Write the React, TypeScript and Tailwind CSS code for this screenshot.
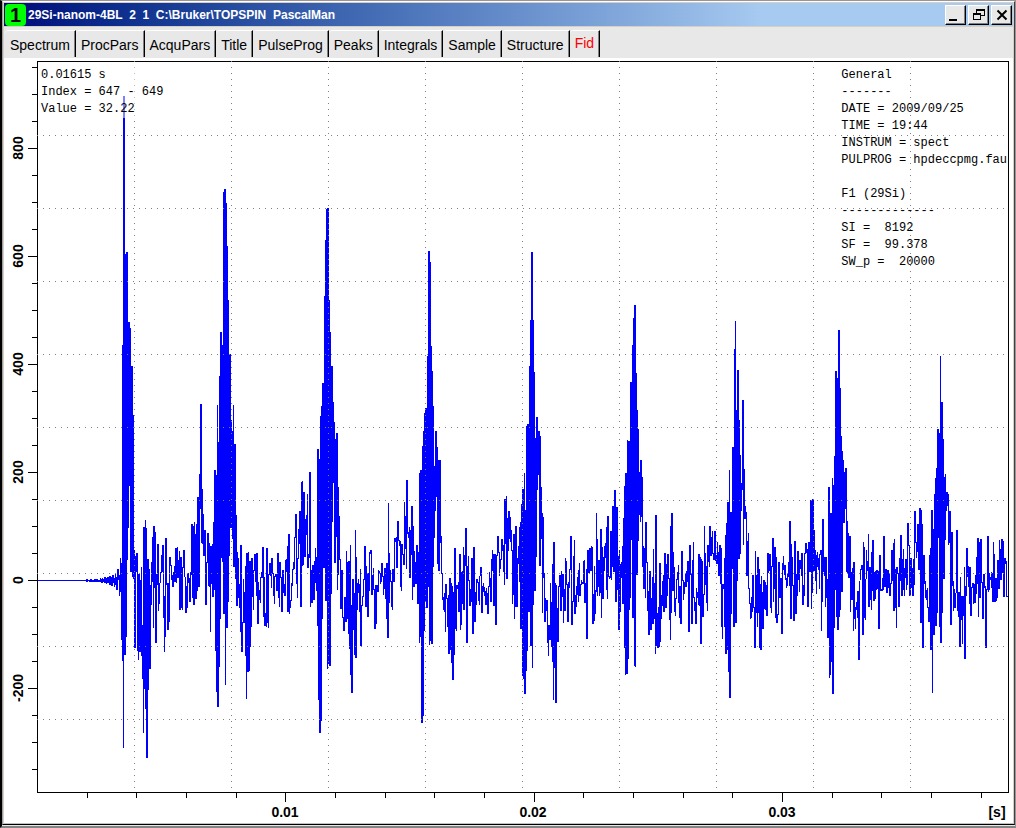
import { useState } from "react";

const tabs = [
  "Spectrum",
  "ProcPars",
  "AcquPars",
  "Title",
  "PulseProg",
  "Peaks",
  "Integrals",
  "Sample",
  "Structure",
  "Fid",
];

const cursorInfo = ["0.01615 s", "Index = 647 - 649", "Value = 32.22"];

const acquisitionInfo = [
  "General",
  "-------",
  "DATE = 2009/09/25",
  "TIME = 19:44",
  "INSTRUM = spect",
  "PULPROG = hpdeccpmg.fau",
  "",
  "F1 (29Si)",
  "-------------",
  "SI =  8192",
  "SF =  99.378",
  "SW_p =  20000",
];

// FID envelope: min/max of the signal for each column, keyed by first column
const envelope: [number, string][] = [
  [86, "579,582 579,582 580,581 580,582 579,582 579,582 580,582 580,582 579,582 579,582"],
  [96, "579,582 579,582 580,582 580,582 578,582 579,583 578,583 579,582 577,583 577,583"],
  [106, "578,584 577,583 577,583 576,585 576,585 577,586 575,586 575,583 578,587 574,585"],
  [116, "577,590 569,590 569,580 575,596 558,592 563,640 345,661 96,748 96,655 254,655"],
  [126, "252,637 252,560 322,528 322,486 328,572 366,572 366,577 415,579 550,648 556,648"],
  [136, "553,572 553,651 574,660 574,652 580,652 567,656 625,679 527,733 527,689 520,709"],
  [146, "528,758 559,758 559,690 569,669 585,669 562,605 537,582 526,628 526,588 532,643"],
  [156, "574,643 544,585 544,611 583,604 572,583 555,573 545,572 545,618 596,652 538,637"],
  [166, "538,585 583,630 583,630 557,622 557,566 565,580 575,587 572,587 566,582 548,582"],
  [176, "548,583 547,578 560,578 551,610 557,610 557,608 567,610 550,568 550,577 577,613"],
  [186, "586,613 573,608 573,583 578,602 572,602 524,575 524,598 526,605 522,605 534,599"],
  [196, "524,599 497,591 497,587 474,587 404,509 404,543 489,544 514,556 530,556 530,605"],
  [206, "562,605 533,563 533,586 543,587 546,632 546,584 544,597 522,597 470,590 470,651"],
  [216, "475,692 405,707 442,707 376,667 332,619 332,558 345,562 192,614 189,614 189,685"],
  [226, "203,628 246,628 300,602 354,556 354,528 420,528 431,539 405,567 444,567 444,579"],
  [236, "515,606 552,606 558,598 584,608 545,632 545,652 622,652 579,623 592,623 566,656"],
  [246, "553,699 553,672 552,672 561,671 561,647 558,627 558,597 570,610 554,571 554,582"],
  [256, "553,596 553,624 582,624 590,600 577,603 572,578 547,578 547,617 577,626 613,626"],
  [266, "548,627 548,623 574,628 563,575 563,576 558,588 558,574 573,596 576,604 574,577"],
  [276, "574,591 553,591 553,598 562,607 562,578 577,612 570,612 570,593 584,596 560,596"],
  [286, "559,572 546,612 534,612 534,614 600,608 583,601 569,586 562,570 537,569 514,538"],
  [296, "514,584 558,598 529,559 511,544 511,607 482,607 481,566 492,565 492,557 519,557"],
  [306, "515,535 494,568 554,568 472,558 472,607 570,603 565,603 565,600 561,600 548,583"],
  [316, "557,591 449,626 449,700 459,733 416,733 406,721 383,619 383,568 296,568 240,601"],
  [326, "209,601 208,669 208,664 300,666 332,666 366,594 366,522 402,483 422,563 439,563"],
  [336, "433,537 433,590 487,575 516,560 559,609 570,609 570,618 617,631 597,631 597,622"],
  [346, "551,622 562,619 561,634 561,649 545,675 605,693 579,693 579,630 593,655 530,658"],
  [356, "557,658 583,610 579,593 584,612 569,646 605,646 596,606 579,597 546,580 546,607"],
  [366, "566,607 573,617 573,617 552,591 550,554 550,595 575,595 568,590 589,629 585,629"],
  [376, "585,624 585,592 570,592 571,574 573,584 563,582 563,577 576,595 568,589 568,599"],
  [386, "563,619 563,638 503,638 553,603 570,582 581,607 569,610 569,582 538,582 538,542"],
  [396, "537,568 521,568 521,541 540,546 541,587 544,591 544,555 554,565 502,565 516,549"],
  [406, "480,569 480,534 532,538 527,578 530,578 506,555 506,600 526,587 551,587 562,584"],
  [416, "545,584 545,604 552,604 473,643 470,637 470,723 446,723 431,716 413,631 408,601"],
  [426, "408,608 356,608 251,587 251,645 262,641 346,644 371,644 406,567 466,538 431,511"],
  [436, "431,497 447,564 460,571 460,571 460,543 536,574 573,600 597,610 593,612 584,632"],
  [446, "584,599 598,627 595,654 578,654 578,650 583,663 586,680 592,680 548,655 548,629"],
  [456, "585,631 585,589 582,612 554,612 554,630 572,625 571,604 547,610 555,610 528,566"],
  [466, "528,643 566,643 556,581 580,606 589,606 558,602 558,634 547,634 547,622 592,622"],
  [476, "579,605 579,583 582,601 576,605 567,576 567,613 586,613 583,592 587,596 591,605"],
  [486, "588,605 593,614 586,614 572,587 578,602 559,602 550,571 554,606 554,606 554,625"],
  [496, "555,625 536,556 536,553 552,576 559,569 539,560 539,551 545,572 499,585 499,544"],
  [506, "496,579 518,579 511,551 511,539 517,542 530,551 550,604 534,595 534,619 526,607"],
  [516, "526,607 558,607 546,564 527,582 522,629 504,629 489,676 489,679 473,694 510,694"],
  [526, "426,671 424,651 424,612 366,612 320,646 252,646 252,668 320,605 372,591 438,591"],
  [536, "417,557 417,490 431,475 431,566 436,566 487,539 513,613 517,578 573,622 598,622"],
  [546, "600,611 600,643 625,656 625,640 583,640 602,647 564,662 542,700 542,668 583,703"],
  [556, "585,703 608,642 586,642 575,587 575,611 571,611 574,597 574,623 589,611 558,611"],
  [566, "561,585 584,622 582,622 569,588 536,570 536,625 601,625 556,602 540,614 595,614"],
  [576, "586,607 577,595 570,602 563,596 584,596 580,585 582,584 561,584 560,603 583,603"],
  [586, "569,639 550,639 550,573 548,573 548,571 546,571 547,624 594,624 566,621 590,614"],
  [596, "513,592 539,596 560,587 560,596 529,593 529,618 547,599 557,599 546,571 543,558"],
  [606, "527,590 516,599 516,577 576,579 531,578 531,580 506,567 506,572 490,572 490,602"],
  [616, "507,602 507,590 556,630 550,630 564,612 562,578 546,604 518,604 486,648 473,675"],
  [626, "473,674 440,674 441,659 441,610 382,598 382,540 345,618 318,618 305,666 305,667"],
  [636, "373,575 410,575 429,541 472,515 460,522 460,517 477,567 546,589 548,589 522,598"],
  [646, "522,563 562,611 591,635 571,635 571,630 598,630 577,624 549,624 583,619 515,654"],
  [656, "515,646 613,648 607,648 563,647 563,642 595,619 581,606 575,612 553,612 553,608"],
  [666, "564,608 554,596 554,579 578,620 526,640 513,613 513,591 552,591 567,612 598,616"],
  [676, "579,599 572,580 565,603 586,618 586,624 551,624 551,581 580,600 582,594 573,587"],
  [686, "571,587 561,582 561,632 545,632 545,575 574,624 560,624 542,598 597,611 602,624"],
  [696, "588,624 592,598 554,605 554,606 557,644 559,644 561,617 594,617 526,595 553,585"],
  [706, "566,603 545,611 545,562 526,567 526,556 537,556 531,554 553,560 531,560 531,561"],
  [716, "555,564 542,564 552,576 545,576 545,584 548,627 584,639 584,589 558,627 535,654"],
  [726, "523,654 502,650 502,672 470,698 512,698 512,614 447,569 447,627 349,627 321,623"],
  [736, "410,623 370,581 370,559 420,559 455,554 483,511 400,490 400,545 469,519 506,519"],
  [746, "512,576 541,576 533,589 588,604 603,619 597,618 575,612 575,608 607,648 551,648"],
  [756, "575,613 557,627 557,613 569,648 584,650 576,650 592,629 580,629 580,609 582,610"],
  [766, "585,616 553,616 553,573 554,571 554,608 566,613 538,567 538,602 547,589 547,618"],
  [776, "557,623 614,623 562,615 562,598 578,598 578,634 563,634 556,570 565,575 565,580"],
  [786, "578,588 574,586 562,577 521,586 521,619 544,619 557,586 585,621 541,621 541,614"],
  [796, "574,614 551,596 551,580 560,592 560,569 553,576 553,605 585,605 553,596 543,554"],
  [806, "543,553 549,607 542,607 542,572 500,572 500,609 499,593 499,571 530,571 550,581"],
  [816, "555,594 552,567 558,570 554,589 550,555 550,631 519,602 519,572 557,576 557,607"],
  [826, "557,598 579,638 487,638 487,678 513,675 513,662 478,694 485,694 456,628 371,590"],
  [836, "371,617 378,630 330,630 330,617 388,610 436,592 451,592 460,523 472,523 468,509"],
  [846, "468,572 521,573 533,578 536,578 536,612 572,600 568,600 562,631 562,619 607,629"],
  [856, "602,610 591,618 591,660 581,660 569,580 565,570 565,635 542,635 547,618 579,620"],
  [866, "550,579 561,571 534,607 567,607 567,600 552,610 540,591 540,601 572,601 571,599"],
  [876, "570,590 570,589 571,629 555,629 555,591 589,591 578,591 536,590 536,587 569,587"],
  [886, "569,593 570,593 570,588 574,596 583,596 550,584 550,581 543,611 539,611 569,608"],
  [896, "567,628 567,574 573,607 558,607 535,581 535,596 559,596 549,590 568,596 559,578"],
  [906, "559,590 523,585 523,546 545,596 558,596 558,588 568,596 559,596 511,585 511,543"],
  [916, "542,558 524,552 524,570 508,570 508,623 510,623 524,648 555,648 555,584 581,598"],
  [926, "590,600 588,608 607,622 555,622 548,650 510,650 510,693 529,635 494,635 478,626"],
  [936, "468,626 429,613 429,538 433,627 356,643 402,643 402,613 439,579 477,579 474,540"],
  [946, "492,511 492,506 494,545 511,543 511,625 532,625 532,586 581,611 589,608 593,608"],
  [956, "530,593 530,611 592,617 592,647 577,647 596,620 596,644 596,616 567,659 586,659"],
  [966, "548,596 548,577 566,587 567,604 567,616 587,616 583,588 583,604 584,603 575,603"],
  [976, "557,594 538,584 538,617 542,598 539,598 539,583 582,619 574,619 574,588 586,648"],
  [986, "589,648 536,590 536,592 573,590 577,580 572,588 573,602 542,602 554,602 578,602"],
  [996, "578,601 560,598 560,589 540,589 549,580 539,580 539,573 541,597 558,597 558,564"],
  [1006, "561,597 596,597"],
];

const envelopePath = envelope
  .map(([start, values]) =>
    values
      .split(" ")
      .map((pair, i) => {
        const [top, bottom] = pair.split(",").map(Number);
        return `M${start + i} ${top}h1V${bottom}h-1z`;
      })
      .join("")
  )
  .join("");

const gridX = [134, 231, 328, 425, 522, 619, 716, 813, 910];
const gridY = [135, 208, 281, 354, 427, 500, 573, 646, 719];

const yTicks = Array.from({ length: 27 }, (_, i) => 67 + i * 27);
const xTicks = Array.from({ length: 19 }, (_, i) =>
  Math.floor(37.5 + ((i + 1) * 149) / 3)
);

const yLabels = [
  { y: 148, text: "800" },
  { y: 256, text: "600" },
  { y: 364, text: "400" },
  { y: 472, text: "200" },
  { y: 580, text: "0" },
  { y: 688, text: "-200" },
];

const xLabels = [
  { x: 285, text: "0.01" },
  { x: 533, text: "0.02" },
  { x: 782, text: "0.03" },
];

function FidPlot() {
  return (
    <svg
      viewBox="4 59 1009 764"
      className="block w-full h-auto"
      shapeRendering="crispEdges"
      role="img"
      aria-label="Free induction decay"
    >
      <path d="M38 580H86V581H38Z" fill="#0000ff" />
      <path d={envelopePath} fill="#0000ff" />

      {/* Axes */}
      <rect x="37.5" y="61.5" width="971" height="731" fill="none" stroke="#000" />
      {yTicks.map((y) => {
        const major = (y - 148) % 108 === 0;
        return (
          <rect
            key={y}
            x={major ? 28 : 32}
            y={y}
            width={major ? 9 : 5}
            height="1"
          />
        );
      })}
      {xTicks.map((x, i) => (
        <rect key={x} x={x} y="793" width="1" height={i % 5 === 4 ? 9 : 5} />
      ))}

      {/* Dotted grid */}
      <g stroke="#808080" strokeDasharray="1 5">
        {gridX.map((x) => (
          <path key={x} d={`M${x}.5 61V792`} />
        ))}
        {gridY.map((y) => (
          <path key={y} d={`M37 ${y}.5H1008`} />
        ))}
      </g>

      <g
        className="font-['Liberation_Sans',Arial,sans-serif] text-[14px] font-bold"
        textAnchor="middle"
      >
        {yLabels.map(({ y, text }) => (
          <text key={text} transform={`translate(23 ${y}) rotate(-90)`}>
            {text}
          </text>
        ))}
        {xLabels.map(({ x, text }) => (
          <text key={text} x={x} y="817">
            {text}
          </text>
        ))}
        <text x="997" y="817">
          [s]
        </text>
      </g>
    </svg>
  );
}

const windowButton =
  "flex h-5 w-[21px] items-center justify-center bg-[#e8e8e8] border-t border-l border-r border-b border-t-white border-l-white border-r-black border-b-black shadow-[inset_-1px_-1px_0_#808080]";

function TitleBar() {
  return (
    <div className="flex h-[23px] items-center gap-0.5 bg-linear-to-r from-[#04047a] to-[#a6caf0] to-75% px-px">
      <span className="flex h-[22px] w-[21px] items-center justify-center rounded-sm bg-[#00ff00] text-xl font-bold text-black">
        1
      </span>
      <h1 className="flex-1 whitespace-pre text-xs font-bold text-white">
        {"29Si-nanom-4BL  2  1  C:\\Bruker\\TOPSPIN  PascalMan"}
      </h1>
      <button className={windowButton} aria-label="Minimize">
        <svg width="16" height="14" shapeRendering="crispEdges">
          <rect x="1" y="11" width="8" height="2" />
        </svg>
      </button>
      <button className={windowButton} aria-label="Restore">
        <svg width="14" height="14" fill="none" stroke="#000" shapeRendering="crispEdges">
          <path d="M4.5 6V1.5H12.5V7.5H9M4 2.5H13M1.5 5.5H8.5V11.5H1.5ZM1 6.5H9" />
        </svg>
      </button>
      <button className={windowButton} aria-label="Close">
        <svg width="14" height="14" stroke="#000" strokeWidth="2">
          <path d="M2.5 2.5L11.5 11.5M11.5 2.5L2.5 11.5" />
        </svg>
      </button>
    </div>
  );
}

export default function App() {
  const [activeTab, setActiveTab] = useState("Fid");

  return (
    <div className="min-h-screen border-t border-r border-b-2 border-l-2 border-t-[#9c9494] border-r-[#9c9494] border-b-[#848484] border-l-black bg-[#e8e8e8] font-['Liberation_Sans',Arial,sans-serif] text-black">
      <div className="border-t border-l border-r border-b border-t-white border-l-[#a0a0a0] border-r-[#404040] border-b-black">
        <div className="border-t border-l border-r border-[#d4d0c8] border-b border-b-[#c0c0c0]">
          <TitleBar />

          <div role="tablist" className="flex flex-wrap border-t border-[#d4d0c8] pt-[3px] pl-px">
            {tabs.map((tab) => (
              <button
                key={tab}
                role="tab"
                aria-selected={activeTab === tab}
                onClick={() => setActiveTab(tab)}
                className={`flex h-[27px] rounded-tl-sm border-t border-r border-t-white border-r-black px-[5px] text-sm shadow-[inset_-1px_0_0_#808080] ${
                  activeTab === tab ? "pt-0.5 text-[#ff0000]" : "pt-1"
                }`}
              >
                {tab}
              </button>
            ))}
          </div>

          <div className="relative mt-px border-t border-white bg-white">
            <FidPlot />
            <pre className="absolute top-2 left-[37px] bg-white/50 font-['Liberation_Mono','Courier_New',monospace] text-xs leading-[17px]">
              {cursorInfo.join("\n")}
            </pre>
            <pre className="absolute top-2 right-1.5 font-['Liberation_Mono','Courier_New',monospace] text-xs leading-[17px]">
              {acquisitionInfo.join("\n")}
            </pre>
          </div>
        </div>
      </div>
    </div>
  );
}
